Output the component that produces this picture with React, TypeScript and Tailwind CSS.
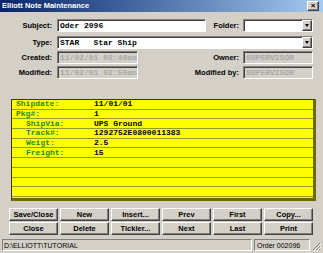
import React from "react";

const sunken =
  "border border-t-[#808080] border-l-[#808080] border-b-white border-r-white shadow-[inset_1px_1px_0_#404040]";
const raised =
  "border border-t-white border-l-white border-r-[#404040] border-b-[#404040] shadow-[inset_-1px_-1px_0_#808080]";

function Label({ w, children }: { w: string; children: React.ReactNode }) {
  return <div className={`${w} shrink-0 text-right font-bold text-[7.5px] text-black`}>{children}</div>;
}

function Field({ w, value, disabled }: { w: string; value: string; disabled?: boolean }) {
  return (
    <div
      className={`${w} h-[13px] ${sunken} flex items-center pl-[2px] font-['Liberation_Mono',monospace] font-bold text-[8px] leading-none ${
        disabled ? "bg-[#d4d0c8] text-[#a8a8a8]" : "bg-white text-black"
      }`}
    >
      {value}
    </div>
  );
}

function Combo({ w, value }: { w: string; value: string }) {
  return (
    <div className={`${w} h-[13px] ${sunken} bg-white flex items-center`}>
      <div className="flex-1 pl-[2px] font-['Liberation_Mono',monospace] font-bold text-[8px] leading-none text-black whitespace-pre">
        {value}
      </div>
      <div className={`w-[10px] h-[11px] bg-[#d4d0c8] ${raised} flex items-center justify-center`}>
        <div className="w-0 h-0 border-l-[2.5px] border-r-[2.5px] border-t-[3px] border-l-transparent border-r-transparent border-t-black" />
      </div>
    </div>
  );
}

const rows: { label: string; value: string; indent?: boolean }[] = [
  { label: "Shipdate:", value: "11/01/01" },
  { label: "Pkg#:", value: "1" },
  { label: "ShipVia:", value: "UPS Ground", indent: true },
  { label: "Track#:", value: "1292752E0800011383", indent: true },
  { label: "Weigt:", value: "2.5", indent: true },
  { label: "Freight:", value: "15", indent: true },
  { label: "", value: "" },
  { label: "", value: "" },
  { label: "", value: "" },
  { label: "", value: "" },
];

const buttons = [
  ["Save/Close", "New", "Insert...", "Prev", "First", "Copy..."],
  ["Close", "Delete", "Tickler...", "Next", "Last", "Print"],
];

export default function App() {
  return (
    <div className="w-[323px] h-[253px] bg-[#d4d0c8] flex flex-col font-['Liberation_Sans',Arial,sans-serif] overflow-hidden">
      <div className="h-[12px] bg-gradient-to-r from-[#0a246a] to-[#a6caf0] flex items-center justify-between pl-[2px] pr-[4px]">
        <span className="text-white font-bold text-[7.5px] leading-none">Elliott Note Maintenance</span>
        <div className={`w-[12px] h-[10px] bg-[#d4d0c8] ${raised} flex items-center justify-center text-[8px] font-bold leading-none text-black`}>
          ×
        </div>
      </div>

      <div className="flex flex-col pt-[7px]">
        <div className="flex items-center h-[13px]">
          <Label w="w-[52px]">Subject:</Label>
          <div className="ml-[5px]">
            <Field w="w-[149px]" value="Oder 2096" />
          </div>
          <Label w="w-[33px]">Folder:</Label>
          <div className="ml-[4px]">
            <Combo w="w-[70px]" value="" />
          </div>
        </div>
        <div className="flex items-center h-[13px] mt-[4px]">
          <Label w="w-[52px]">Type:</Label>
          <div className="ml-[5px]">
            <Combo w="w-[256px]" value="STAR   Star Ship" />
          </div>
        </div>
        <div className="flex items-center h-[13px] mt-[2px]">
          <Label w="w-[52px]">Created:</Label>
          <div className="ml-[5px]">
            <Field w="w-[81px]" value="11/02/01 02:49am" disabled />
          </div>
          <Label w="w-[101px]">Owner:</Label>
          <div className="ml-[4px]">
            <Field w="w-[70px]" value="SUPERVISOR" disabled />
          </div>
        </div>
        <div className="flex items-center h-[13px] mt-[2px]">
          <Label w="w-[52px]">Modified:</Label>
          <div className="ml-[5px]">
            <Field w="w-[81px]" value="11/02/01 02:50am" disabled />
          </div>
          <Label w="w-[101px]">Modified by:</Label>
          <div className="ml-[4px]">
            <Field w="w-[70px]" value="SUPERVISOR" disabled />
          </div>
        </div>
      </div>

      <div className="ml-[11px] mt-[20px] w-[305px] h-[102px] bg-[#ffff00] border border-[#3c3c00] border-r-[3px] border-b-[3px] border-r-[#6b6b00] border-b-[#6b6b00] overflow-hidden">
        {rows.map((r, i) => (
          <div
            key={i}
            className="h-[9.7px] border-b border-[#8ea020] flex items-center font-['Liberation_Mono',monospace] font-bold text-[8px] leading-none"
          >
            <span className={`${r.indent ? "pl-[14px] w-[82px]" : "pl-[4px] w-[82px]"} text-[#1f8a2a]`}>{r.label}</span>
            <span className="text-black">{r.value}</span>
          </div>
        ))}
      </div>

      <div className="ml-[9px] mt-[7px] w-[304px] flex flex-col gap-[1px]">
        {buttons.map((row, i) => (
          <div key={i} className="grid grid-cols-6 gap-[2px]">
            {row.map((b) => (
              <div
                key={b}
                className={`h-[13px] bg-[#d4d0c8] ${raised} flex items-center justify-center text-[7.5px] font-bold text-black leading-none`}
              >
                {b}
              </div>
            ))}
          </div>
        ))}
      </div>

      <div className="mt-[4px] flex items-center h-[12px] px-[2px] gap-[2px]">
        <div className="flex-1 h-[12px] border border-t-[#808080] border-l-[#808080] border-b-white border-r-white flex items-center pl-[1px] text-[7px] leading-none text-black">
          D:\ELLIOTT\TUTORIAL
        </div>
        <div className="w-[56px] h-[12px] border border-t-[#808080] border-l-[#808080] border-b-white border-r-white flex items-center pl-[2px] text-[7px] leading-none text-black">
          Order 002096
        </div>
        <svg width="9" height="9" viewBox="0 0 9 9" className="self-end">
          <path d="M8 1 L1 8 M8 4 L4 8 M8 7 L7 8" stroke="#808080" strokeWidth="1" />
          <path d="M9 2 L2 9 M9 5 L5 9" stroke="white" strokeWidth="1" />
        </svg>
      </div>
    </div>
  );
}
